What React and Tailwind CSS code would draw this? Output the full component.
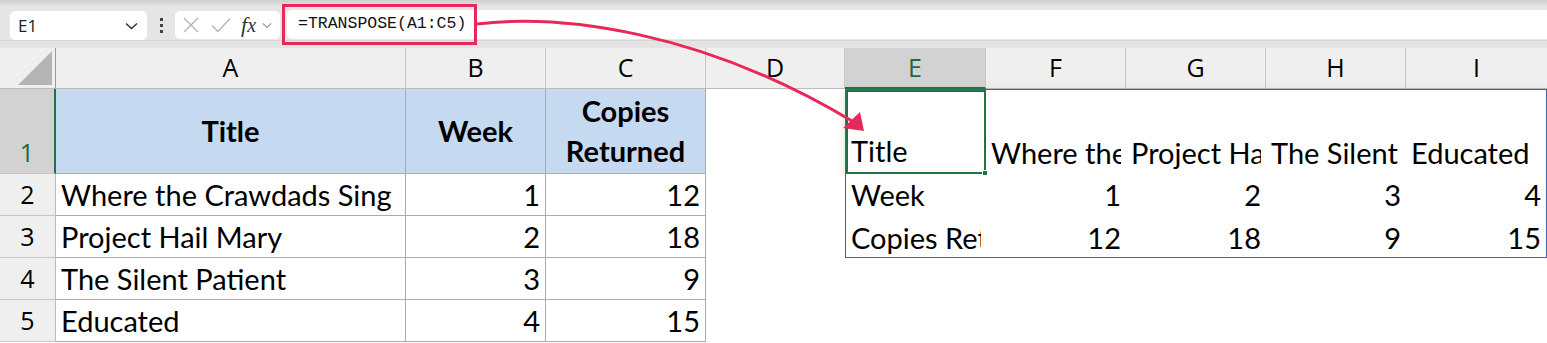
import React from "react";

const CELL = "font-['Lato',_'Liberation_Sans',_sans-serif] text-[29px] text-black";
const HDR = "font-['Open_Sans',_'Noto_Sans',_sans-serif] text-[25px]";

function ColHead({ label, selected, last }) {
  return (
    <div
      className={`${HDR} flex items-center justify-center border-b border-[#bcbcbc] ${last ? "" : "border-r border-r-[#c6c6c6]"} ${
        selected ? "bg-[#d2d2d2] text-[#1d6b40] border-b-2 border-b-[#217346]" : "bg-[#efefef] text-black"
      }`}
    >
      {label}
    </div>
  );
}

function RowHead({ n, selected }) {
  return (
    <div
      className={`${HDR} flex justify-center border-b border-[#c6c6c6] ${
        selected
          ? "bg-[#d2d2d2] text-[#1d6b40] items-end pb-[2px] border-r-2 border-r-[#217346]"
          : "bg-[#efefef] text-black items-center border-r border-r-[#bcbcbc]"
      }`}
    >
      {n}
    </div>
  );
}

function Data({ children, right, bold, blue, className = "" }) {
  return (
    <div
      className={`${CELL} flex items-center border-r border-b border-[#ababab] px-[5px] whitespace-nowrap overflow-hidden ${
        right ? "justify-end" : "justify-start"
      } ${bold ? "font-bold" : ""} ${blue ? "bg-[#c5d9f0]" : "bg-white"} ${className}`}
    >
      {children}
    </div>
  );
}

const rows = [
  ["Where the Crawdads Sing", 1, 12],
  ["Project Hail Mary", 2, 18],
  ["The Silent Patient", 3, 9],
  ["Educated", 4, 15],
];

export default function App() {
  return (
    <div className="relative w-[1547px] h-[343px] bg-white overflow-hidden">
      {/* Formula bar */}
      <div className="h-[48px] bg-[#e6e6e6] flex flex-col">
        <div className="h-[7px] bg-gradient-to-b from-[#cfcfcf] to-[#e6e6e6]" />
        <div className="flex items-start h-[29px] mt-[3px]">
          <div className="ml-[10px] w-[137px] h-[29px] bg-white rounded-[5px] flex items-center justify-between pl-[8px] pr-[9px] mt-[1px]">
            <span className="font-['Open_Sans',_sans-serif] text-[17px] text-[#222]">E1</span>
            <svg width="13" height="8" viewBox="0 0 13 8" fill="none" stroke="#333" strokeWidth="1.5">
              <path d="M1 1.5 L6.5 6.5 L12 1.5" />
            </svg>
          </div>
          <div className="w-[28px] h-[29px] flex flex-col items-center justify-center gap-[3px] mt-[1px]">
            <div className="w-[3px] h-[3px] bg-[#444]" />
            <div className="w-[3px] h-[3px] bg-[#444]" />
            <div className="w-[3px] h-[3px] bg-[#444]" />
          </div>
          <div className="w-[105px] h-[28px] bg-white rounded-[5px] flex items-center pl-[8px] mt-[1px]">
            <svg width="16" height="16" viewBox="0 0 16 16" stroke="#b4b4b4" strokeWidth="1.3" fill="none">
              <path d="M1 1 L15 15 M15 1 L1 15" />
            </svg>
            <svg className="ml-[12px]" width="20" height="16" viewBox="0 0 20 16" stroke="#b4b4b4" strokeWidth="1.3" fill="none">
              <path d="M1 8.5 L7 14.5 L19 1.5" />
            </svg>
            <span className="ml-[10px] font-['Liberation_Serif',_serif] italic text-[22px] text-[#333] leading-none">
              f<span className="text-[20px]">x</span>
            </span>
            <svg className="ml-[6px]" width="10" height="7" viewBox="0 0 10 7" fill="none" stroke="#999" strokeWidth="1.2">
              <path d="M1 1.5 L5 5.5 L9 1.5" />
            </svg>
          </div>
          <div className="ml-[7px] flex-1 h-[29px] bg-white rounded-l-[5px] flex items-center pl-[11px]">
            <span className="font-['Liberation_Mono',_monospace] text-[16.5px] text-[#111]">=TRANSPOSE(A1:C5)</span>
          </div>
        </div>
        <div className="flex-1 border-t border-[#d6d6d6] bg-[#e3e3e3] mt-[1px]" />
      </div>

      {/* Sheet grid */}
      <div className="grid grid-cols-[56px_350px_140px_160px_139px_141px_140px_140px_140px_141px] grid-rows-[41px_85px_42px_42px_42px_42px]">
        <div className="bg-[#efefef] border-r border-r-[#9a9a9a] border-b border-[#bcbcbc] flex items-end justify-end pr-[3px] pb-[3px]">
          <svg width="34" height="34" viewBox="0 0 34 34">
            <path d="M0 34 L34 34 L34 0 Z" fill="#b4b4b4" />
          </svg>
        </div>
        {["A", "B", "C", "D", "E", "F", "G", "H", "I"].map((c, i) => (
          <ColHead key={c} label={c} selected={c === "E"} last={i === 8} />
        ))}

        {/* Row 1 */}
        <RowHead n="1" selected />
        <Data bold blue>
          <span className="w-full text-center">Title</span>
        </Data>
        <Data bold blue>
          <span className="w-full text-center">Week</span>
        </Data>
        <Data bold blue>
          <span className="w-full text-center leading-[40px] whitespace-normal">
            Copies
            <br />
            Returned
          </span>
        </Data>
        <div className="bg-white" />

        {/* Transposed block E1:I3 */}
        <div className="col-span-5 row-span-3 border border-[#3b64ad] shadow-[0_3px_10px_rgba(0,0,0,0.12)] bg-white grid grid-cols-[140px_140px_140px_140px_1fr] grid-rows-[84px_42px_1fr]">
          <div className={`${CELL} border-2 border-[#217346] flex items-end px-[3px] whitespace-nowrap relative`}>
            Title
            <div className="absolute right-[-4px] bottom-[-4px] w-[6px] h-[6px] bg-[#217346] border border-white" />
          </div>
          {["Where the Crawdads Sing", "Project Hail Mary", "The Silent Patient", "Educated"].map((t) => (
            <div key={t} className={`${CELL} flex items-end px-[5px] whitespace-nowrap overflow-hidden`}>
              <span className="overflow-hidden">{t}</span>
            </div>
          ))}
          <div className={`${CELL} flex items-center px-[5px] whitespace-nowrap overflow-hidden`}>Week</div>
          {[1, 2, 3, 4].map((n) => (
            <div key={n} className={`${CELL} flex items-center justify-end px-[5px]`}>
              {n}
            </div>
          ))}
          <div className={`${CELL} flex items-center px-[5px] whitespace-nowrap overflow-hidden`}>
            <span className="overflow-hidden">Copies Returned</span>
          </div>
          {[12, 18, 9, 15].map((n) => (
            <div key={n} className={`${CELL} flex items-center justify-end px-[5px]`}>
              {n}
            </div>
          ))}
        </div>

        {rows.map((r, i) => (
          <React.Fragment key={r[0]}>
            <RowHead n={String(i + 2)} />
            <Data>{r[0]}</Data>
            <Data right>{r[1]}</Data>
            <Data right>{r[2]}</Data>
            <div className="bg-white" />
            {i >= 2 && (
              <>
                <div className="bg-white" />
                <div className="bg-white" />
                <div className="bg-white" />
                <div className="bg-white" />
                <div className="bg-white" />
              </>
            )}
          </React.Fragment>
        ))}
      </div>

      {/* Annotation overlay: red box + arrow */}
      <div className="absolute left-[282px] top-[4px] w-[195px] h-[41px] border-[3px] border-[#e8285a] pointer-events-none" />
      <svg className="absolute left-0 top-0 pointer-events-none" width="1547" height="343" viewBox="0 0 1547 343">
        <path d="M477 24 C 560 14, 700 30, 852 121" fill="none" stroke="#e8285a" strokeWidth="3" />
        <path d="M843 128 L860 112 L864 131 Z" fill="#e8285a" />
      </svg>
    </div>
  );
}
